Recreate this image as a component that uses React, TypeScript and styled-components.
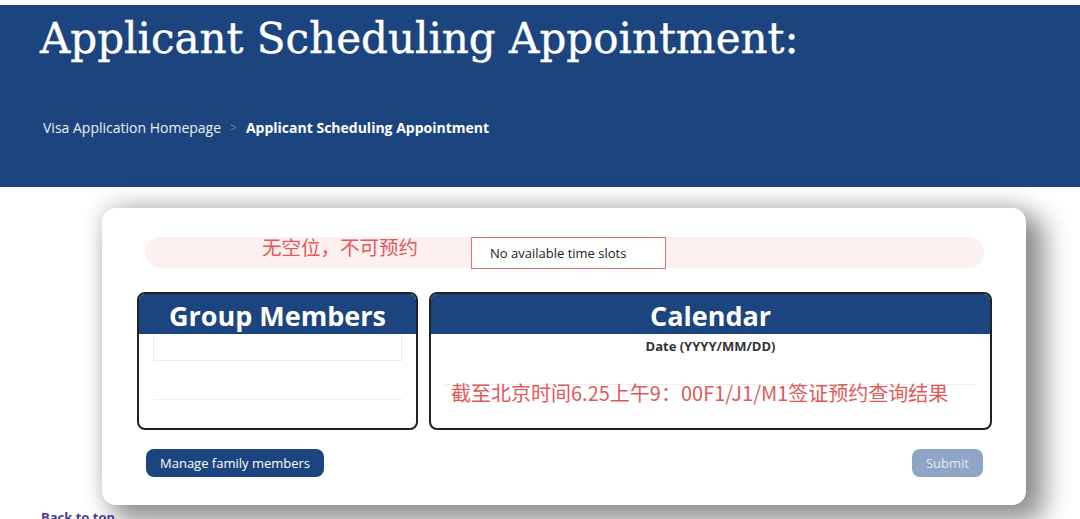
import * as React from "react";
import styled, { createGlobalStyle } from "styled-components";

const BLUE = "#1c4580";
const RED = "#e05a5a";

const GlobalStyle = createGlobalStyle`
  html, body {
    margin: 0;
    padding: 0;
    background: #ffffff;
    overflow: hidden;
  }
  body {
    font-family: "Open Sans", "Noto Sans", "Noto Sans CJK SC", sans-serif;
  }
`;

const Page = styled.div`
  width: 1080px;
  height: 519px;
  padding-top: 5px;
  box-sizing: border-box;
  overflow: hidden;
`;

const Header = styled.header`
  background: ${BLUE};
  height: 182px;
  padding: 10px 0 0 40px;
  box-sizing: border-box;
`;

const Title = styled.h1`
  margin: 0;
  font-family: "DejaVu Serif", "Liberation Serif", serif;
  font-weight: 400;
  font-size: 42px;
  line-height: 48px;
  color: #ffffff;
  -webkit-text-stroke: 0.4px #ffffff;
`;

const Breadcrumb = styled.nav`
  margin: 55px 0 0 3px;
  display: flex;
  align-items: center;
  gap: 9px;
  font-size: 14px;
  color: #ffffff;
`;

const Crumb = styled.span<{ current?: boolean }>`
  font-weight: ${(props) => (props.current ? 700 : 400)};
  opacity: ${(props) => (props.current ? 1 : 0.92)};
`;

const Sep = styled.span`
  color: #6f86ad;
  font-size: 12px;
`;

const Main = styled.main`
  padding: 21px 0 0 102px;
`;

const Card = styled.section`
  width: 924px;
  height: 297px;
  background: #ffffff;
  border-radius: 14px;
  box-shadow: 14px 12px 26px 5px rgba(0, 0, 0, 0.42),
    0 -6px 22px rgba(0, 0, 0, 0.12);
  padding: 29px 34px 0 35px;
  box-sizing: border-box;
  display: flex;
  flex-direction: column;
`;

const Notice = styled.div`
  margin: 0 8px;
  height: 31px;
  border-radius: 16px;
  background: #fcf0f1;
  display: flex;
  align-items: center;
  padding-left: 117px;
`;

const NoticeCn = styled.span`
  font-family: "Noto Sans CJK SC", sans-serif;
  font-size: 19.5px;
  line-height: 24px;
  color: ${RED};
  margin-top: -11px;
  width: 209px;
`;

const SlotBox = styled.div`
  width: 195px;
  height: 32px;
  box-sizing: border-box;
  border: 1.5px solid #e46f6f;
  background: #ffffff;
  display: flex;
  align-items: center;
  padding-left: 18px;
  font-size: 13px;
  color: #222;
`;

const Panels = styled.div`
  margin-top: 24px;
  display: grid;
  grid-template-columns: 281px 1fr;
  gap: 11px;
`;

const Panel = styled.div`
  height: 138px;
  border: 2px solid #222;
  border-radius: 8px;
  overflow: hidden;
  box-sizing: border-box;
  display: flex;
  flex-direction: column;
`;

const PanelHead = styled.div`
  background: ${BLUE};
  height: 40px;
  flex-shrink: 0;
  display: flex;
  align-items: center;
  justify-content: center;
  color: #ffffff;
  font-weight: 700;
  font-size: 27px;
  padding-top: 2px;
  box-sizing: border-box;
`;

const PanelBody = styled.div`
  flex: 1;
  padding: 0 14px;
  display: flex;
  flex-direction: column;
`;

const FaintInput = styled.div`
  height: 26px;
  border: 1px solid #ececec;
  border-top: none;
`;

const FaintLine = styled.div<{ offset: number }>`
  margin-top: ${(props) => props.offset}px;
  border-top: 1px solid #efefef;
`;

const DateLabel = styled.div`
  text-align: center;
  margin-top: 3px;
  font-size: 13px;
  font-weight: 700;
  color: #333;
`;

const ResultCn = styled.div`
  margin-top: 24px;
  padding-left: 6px;
  font-family: "Noto Sans CJK SC", sans-serif;
  font-size: 20px;
  color: ${RED};
  line-height: 28px;
  white-space: nowrap;
  background: linear-gradient(#fff 0 5px, #eeeeee 5px 6px, transparent 6px);
`;

const Actions = styled.div`
  margin-top: 19px;
  padding: 0 9px 0 9px;
  display: flex;
  justify-content: space-between;
`;

const Button = styled.button<{ disabled?: boolean }>`
  height: 28px;
  border: none;
  border-radius: 8px;
  padding: 0 14px;
  font-family: "Open Sans", sans-serif;
  font-size: 13px;
  background: ${(props) => (props.disabled ? "#8fa4c7" : BLUE)};
  color: ${(props) => (props.disabled ? "#e4eaf4" : "#ffffff")};
`;

const BackToTop = styled.a`
  display: block;
  margin: 3px 0 0 41px;
  font-size: 13px;
  font-weight: 700;
  color: #4a3a96;
  text-decoration: none;
`;

export default function App() {
  return (
    <>
      <GlobalStyle />
      <Page>
        <Header>
          <Title>Applicant Scheduling Appointment:</Title>
          <Breadcrumb>
            <Crumb>Visa Application Homepage</Crumb>
            <Sep>&gt;</Sep>
            <Crumb current>Applicant Scheduling Appointment</Crumb>
          </Breadcrumb>
        </Header>
        <Main>
          <Card>
            <Notice>
              <NoticeCn>无空位，不可预约</NoticeCn>
              <SlotBox>No available time slots</SlotBox>
            </Notice>
            <Panels>
              <Panel>
                <PanelHead>Group Members</PanelHead>
                <PanelBody>
                  <FaintInput />
                  <FaintLine offset={38} />
                </PanelBody>
              </Panel>
              <Panel>
                <PanelHead>Calendar</PanelHead>
                <PanelBody>
                  <DateLabel>Date (YYYY/MM/DD)</DateLabel>
                  <ResultCn>截至北京时间6.25上午9：00F1/J1/M1签证预约查询结果</ResultCn>
                </PanelBody>
              </Panel>
            </Panels>
            <Actions>
              <Button>Manage family members</Button>
              <Button disabled>Submit</Button>
            </Actions>
          </Card>
        </Main>
        <BackToTop href="#">Back to top</BackToTop>
      </Page>
    </>
  );
}
